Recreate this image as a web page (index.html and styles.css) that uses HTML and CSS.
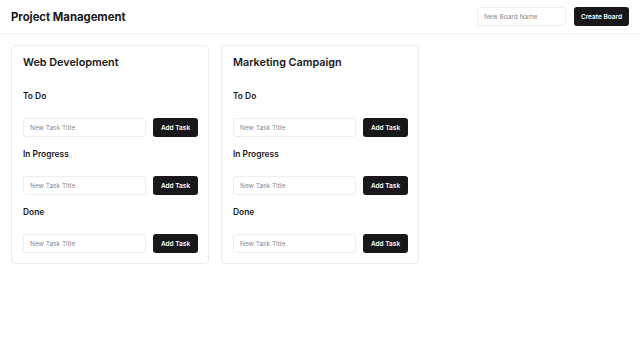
FILE: index.html
```html
<!DOCTYPE html>
<html lang="en">
	<head>
		<meta charset="UTF-8" />
		<meta name="viewport" content="width=device-width, initial-scale=1.0" />
		<title>Project Management</title>
		<link rel="stylesheet" href="styles.css">
	</head>
	<body>
		<header class="topbar">
			<h1 class="app-title">Project Management</h1>
			<div class="new-board">
				<input class="field board-field" type="text" placeholder="New Board Name" />
				<button class="btn">Create Board</button>
			</div>
		</header>
		<main class="boards">
			<div class="board">
				<h2 class="board-title">Web Development</h2>
				<div class="column">
					<h3 class="column-title">To Do</h3>
					<div class="task-form">
						<input class="field" type="text" placeholder="New Task Title" />
						<button class="btn task-btn">Add Task</button>
					</div>
				</div>
				<div class="column">
					<h3 class="column-title">In Progress</h3>
					<div class="task-form">
						<input class="field" type="text" placeholder="New Task Title" />
						<button class="btn task-btn">Add Task</button>
					</div>
				</div>
				<div class="column">
					<h3 class="column-title">Done</h3>
					<div class="task-form">
						<input class="field" type="text" placeholder="New Task Title" />
						<button class="btn task-btn">Add Task</button>
					</div>
				</div>
			</div>
			<div class="board">
				<h2 class="board-title">Marketing Campaign</h2>
				<div class="column">
					<h3 class="column-title">To Do</h3>
					<div class="task-form">
						<input class="field" type="text" placeholder="New Task Title" />
						<button class="btn task-btn">Add Task</button>
					</div>
				</div>
				<div class="column">
					<h3 class="column-title">In Progress</h3>
					<div class="task-form">
						<input class="field" type="text" placeholder="New Task Title" />
						<button class="btn task-btn">Add Task</button>
					</div>
				</div>
				<div class="column">
					<h3 class="column-title">Done</h3>
					<div class="task-form">
						<input class="field" type="text" placeholder="New Task Title" />
						<button class="btn task-btn">Add Task</button>
					</div>
				</div>
			</div>
		</main>
	</body>
</html>
```

FILE: styles.css
```css
body {
	font-family: "Inter", "Liberation Sans", sans-serif;
	background-color: #fff;
	color: #18181b;
	margin: 0;
}
.topbar {
	display: flex;
	justify-content: space-between;
	align-items: center;
	height: 33px;
	padding: 0 11px 0 11px;
	border-bottom: 1px solid #f0f0f0;
}
.app-title {
	font-size: 11.3px;
	font-weight: 700;
	margin: 0;
}
.new-board {
	display: flex;
	gap: 8px;
	align-items: center;
}
.field {
	box-sizing: border-box;
	height: 19px;
	border: 1px solid #eeeeee;
	border-radius: 3px;
	padding: 0 6px;
	font-family: inherit;
	font-size: 6.5px;
	color: #333;
	background: #fff;
}
.field::placeholder {
	color: #8a8a8a;
}
.board-field {
	width: 89px;
}
.btn {
	height: 19px;
	background-color: #18181b;
	color: #fff;
	border: none;
	border-radius: 3px;
	padding: 0 7px;
	font-family: inherit;
	font-size: 6.5px;
	font-weight: 600;
}
.boards {
	display: flex;
	align-items: flex-start;
	gap: 12px;
	padding: 11px 11px;
}
.board {
	box-sizing: border-box;
	width: 198px;
	border: 1px solid #ececec;
	border-radius: 4px;
	padding: 9px 10px 10px 11px;
}
.board-title {
	font-size: 10.8px;
	font-weight: 600;
	line-height: 16px;
	margin: 0 0 19px 0;
}
.column {
	margin-bottom: 11px;
}
.column:last-child {
	margin-bottom: 0;
}
.column-title {
	font-size: 8.4px;
	font-weight: 600;
	line-height: 12px;
	margin: 0 0 16px 0;
}
.task-form {
	display: flex;
	gap: 7px;
}
.task-form .field {
	flex: 1;
	min-width: 0;
}
.task-btn {
	width: 45px;
	padding: 0;
}
```
